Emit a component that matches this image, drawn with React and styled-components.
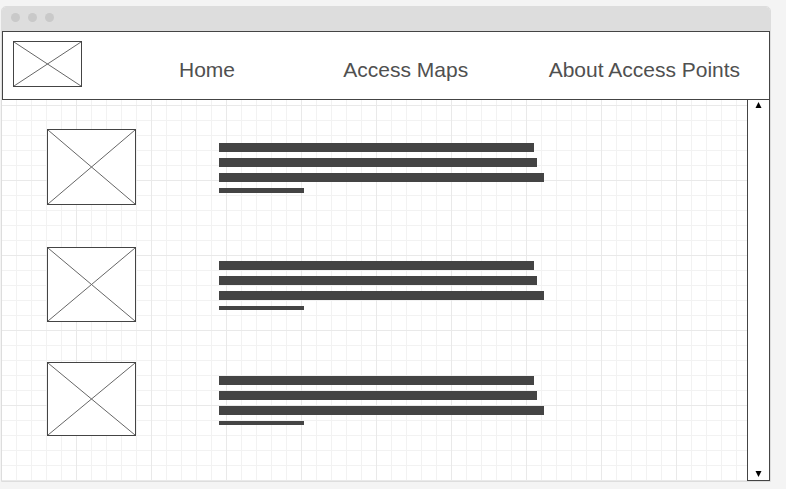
import React from "react";
import styled, { createGlobalStyle } from "styled-components";

const ink = "#444444";

const GlobalStyle = createGlobalStyle`
  *, *::before, *::after { box-sizing: border-box; }
  body {
    margin: 0;
    background: #f4f4f4;
    color: ${ink};
    font-family: "Liberation Sans", Arial, sans-serif;
  }
`;

const BrowserWindow = styled.div`
  display: flex;
  flex-direction: column;
  margin: 6px 15px 7px 1px;
  border: 1px solid #dddddd;
  border-radius: 5px 5px 0 0;
  background: #ffffff;
`;

const TitleBar = styled.div`
  display: flex;
  align-items: flex-start;
  gap: 8px;
  height: 24px;
  padding: 6px 9px;
  border-radius: 4px 4px 0 0;
  background: #dddddd;
`;

const Dot = styled.span`
  width: 9px;
  height: 9px;
  border-radius: 50%;
  background: #c9c9c9;
`;

const Header = styled.header`
  display: flex;
  align-items: flex-start;
  padding: 9px 27px 12px 10px;
  border: 1px solid ${ink};
`;

const Nav = styled.nav`
  flex: 1;
  display: grid;
  grid-template-columns: 164fr 205fr 193fr;
  margin-left: 97px;
  padding-top: 17px;
`;

const NavLink = styled.a`
  color: #505050;
  font-size: 21px;
  line-height: 24px;
  text-decoration: none;
  white-space: nowrap;
`;

const Frame = styled.svg`
  display: block;
  flex: none;
  width: ${(p) => p.$width}px;
  height: ${(p) => p.$height}px;
  border: 1px solid ${ink};
  background: #ffffff;
`;

const Body = styled.div`
  display: flex;
`;

const Main = styled.main`
  flex: 1;
  min-width: 0;
  padding: 29px 45px 45px;
  background-color: #ffffff;
  background-image:
    linear-gradient(to right, #e9e9e9 1px, transparent 1px),
    linear-gradient(to bottom, #e9e9e9 1px, transparent 1px),
    linear-gradient(to right, #f2f2f2 1px, transparent 1px),
    linear-gradient(to bottom, #f2f2f2 1px, transparent 1px);
  background-size: 75px 75px, 75px 75px, 15px 15px, 15px 15px;
  background-position: 74px 5px;
`;

const Row = styled.article`
  display: flex;
  align-items: flex-start;
  gap: 83px;
  margin-bottom: ${(p) => p.$space}px;
`;

const Lines = styled.div`
  flex: 1;
  min-width: 0;
  display: flex;
  flex-direction: column;
  gap: 6px;
  padding-top: 14px;
`;

const Line = styled.div`
  width: ${(p) => p.$width}px;
  max-width: 100%;
  height: ${(p) => p.$height}px;
  background: ${ink};
`;

const ScrollBar = styled.div`
  display: flex;
  flex-direction: column;
  justify-content: space-between;
  width: 23px;
  border: 1px solid ${ink};
  border-top: 0;
  background: #ffffff;
`;

const ScrollButton = styled.button`
  display: flex;
  justify-content: center;
  width: 100%;
  padding: ${(p) => (p.$down ? "0 0 3px" : "2px 0 0")};
  border: 0;
  background: none;
`;

const Arrow = styled.svg`
  display: block;
  width: 7px;
  height: 6px;
`;

const links = ["Home", "Access Maps", "About Access Points"];

const rows = [
  { height: 76, space: 42, last: 5 },
  { height: 75, space: 40, last: 4 },
  { height: 74, space: 0, last: 4 },
];

function Placeholder({ width, height, label }) {
  return (
    <Frame
      $width={width}
      $height={height}
      viewBox="0 0 100 100"
      preserveAspectRatio="none"
      role="img"
      aria-label={label}
    >
      <path
        d="M0 0L100 100M100 0L0 100"
        fill="none"
        stroke="#666666"
        strokeWidth="1"
        vectorEffect="non-scaling-stroke"
      />
    </Frame>
  );
}

export default function App() {
  return (
    <>
      <GlobalStyle />
      <BrowserWindow>
        <TitleBar>
          <Dot />
          <Dot />
          <Dot />
        </TitleBar>
        <Header>
          <Placeholder width={69} height={46} label="Logo" />
          <Nav>
            {links.map((text) => (
              <NavLink key={text} href="#">
                {text}
              </NavLink>
            ))}
          </Nav>
        </Header>
        <Body>
          <Main>
            {rows.map((row, i) => (
              <Row key={i} $space={row.space}>
                <Placeholder width={89} height={row.height} label="Image" />
                <Lines>
                  <Line $width={315} $height={9} />
                  <Line $width={318} $height={9} />
                  <Line $width={325} $height={9} />
                  <Line $width={85} $height={row.last} />
                </Lines>
              </Row>
            ))}
          </Main>
          <ScrollBar>
            <ScrollButton type="button" aria-label="Scroll up">
              <Arrow viewBox="0 0 7 6">
                <path d="M3.5 0L6.5 6H0.5Z" fill="#000000" />
              </Arrow>
            </ScrollButton>
            <ScrollButton type="button" aria-label="Scroll down" $down>
              <Arrow viewBox="0 0 7 6">
                <path d="M0.5 0H6.5L3.5 6Z" fill="#000000" />
              </Arrow>
            </ScrollButton>
          </ScrollBar>
        </Body>
      </BrowserWindow>
    </>
  );
}
